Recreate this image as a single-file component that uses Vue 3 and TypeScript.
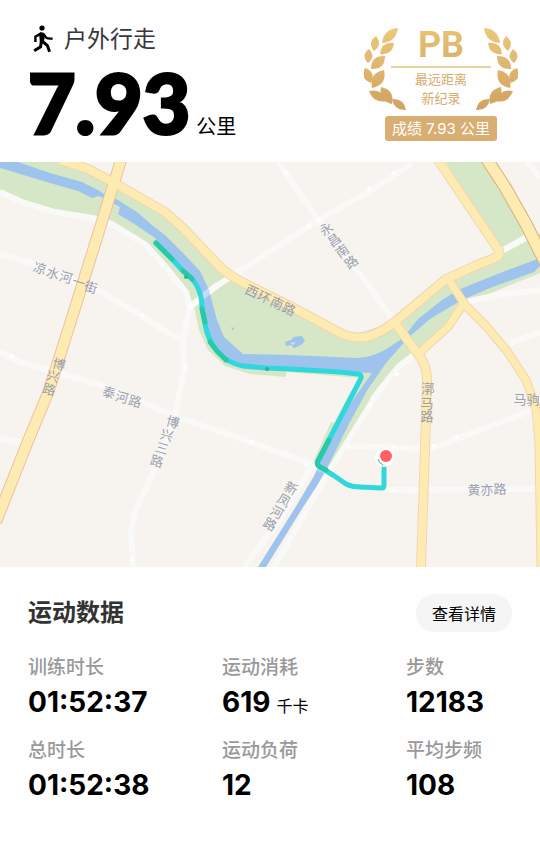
<script setup lang="ts">
interface Stat {
  label: string
  value: string
  unit?: string
}

interface RoadLabel {
  angle: number
  size: number
  glyphs: [string, number, number][]
}

const stats: Stat[] = [
  { label: '训练时长', value: '01:52:37' },
  { label: '运动消耗', value: '619', unit: '千卡' },
  { label: '步数', value: '12183' },
  { label: '总时长', value: '01:52:38' },
  { label: '运动负荷', value: '12' },
  { label: '平均步频', value: '108' },
]

// Leaves of the left laurel branch: base point, tip point, thickness
const leaves: number[][] = [
  [18, 19, 34, 4, 9],
  [10, 27, 12, 12, 8],
  [16, 30, 30, 19, 9],
  [4, 39, 5, 25, 8],
  [7, 45, 21, 32, 10],
  [7, 59, 1, 44, 9],
  [8, 64, 20, 46, 11],
  [5, 67, 23, 77, 9],
  [28, 80, 17, 63, 10],
  [28, 75, 42, 86, 8],
]

function leafPath([x1, y1, x2, y2, w]: number[]): string {
  const length = Math.hypot(x2 - x1, y2 - y1)
  const nx = (-(y2 - y1) / length) * w
  const ny = ((x2 - x1) / length) * w
  const mx = (x1 + x2) / 2
  const my = (y1 + y2) / 2
  return `M${x1} ${y1}Q${mx + nx} ${my + ny} ${x2} ${y2}Q${mx - nx} ${my - ny} ${x1} ${y1}Z`
}

const quietRoads: string[] = [
  'M0 254L34 264L98 290L140 315L182 341',
  'M0 192L22 202L55 212L98 219L112 224L146 245L166 267L186 292L190 306L183 340L184 370L175 415L155 468L135 512L131 530L133 567',
  'M188 308L218 285L310 225L375 188L412 164',
  'M278 162L318 219L360 274L392 318',
  'M0 352L20 362L100 385L180 418L250 442L318 466',
  'M0 438L22 443',
  'M312 465L280 520L244 567',
  'M415 354L398 367L378 392L330 470L274 567',
  'M347 446L430 449L480 430L530 411',
  'M384 490L540 489',
  'M466 302L498 295L540 290',
  'M527 162L540 178',
  'M510 343L540 332',
]

const majorRoads: { d: string; width: number; edge: string }[] = [
  { d: 'M464 303L448 327L418 354', width: 8, edge: '#f2d5ae' },
  { d: 'M446 276L466 306L486 326L507 351L526 380L536 408L539 445L541 567', width: 8, edge: '#f2d5ae' },
  { d: 'M392 319L421 358Q427 368 427 380L425 450L421 567', width: 9, edge: '#f2d5ae' },
  { d: 'M60 160L88 169L118 185L165 212L182 227L222 269L236 279L290 306L340 333Q352 339 366 337Q380 334 396 321L446 279L475 266L497 257Q501 254 498 249L438 160', width: 9, edge: '#f2d5ae' },
  { d: 'M121 160L100 228L59 359L48 393L28 441L-4 522', width: 11, edge: '#eebfa0' },
  { d: 'M486 158L505 187L526 224L546 264', width: 12, edge: '#d8b07c' },
]

const roadLabels: RoadLabel[] = [
  { angle: 17, size: 13, glyphs: [['凉', 40, 268], ['水', 53, 273], ['河', 66, 277], ['一', 79, 282], ['街', 91, 287]] },
  { angle: 15, size: 13, glyphs: [['博', 59, 364], ['兴', 53, 376], ['路', 49, 389]] },
  { angle: 15, size: 13, glyphs: [['泰', 109, 392], ['河', 122, 397], ['路', 135, 401]] },
  { angle: 16, size: 13, glyphs: [['博', 173, 422], ['兴', 167, 435], ['三', 162, 448], ['路', 157, 461]] },
  { angle: -36, size: 13, glyphs: [['永', 326, 229], ['昌', 334, 240], ['南', 342, 251], ['路', 351, 262]] },
  { angle: 25, size: 13, glyphs: [['西', 252, 291], ['环', 264, 297], ['南', 277, 303], ['路', 289, 309]] },
  { angle: 29, size: 13, glyphs: [['新', 291, 488], ['凤', 284, 500], ['河', 277, 512], ['路', 270, 524]] },
  { angle: 0, size: 13, glyphs: [['漷', 428, 388], ['马', 427, 403], ['路', 427, 416]] },
  { angle: 0, size: 13, glyphs: [['马', 520, 399], ['驹', 533, 399]] },
  { angle: -1, size: 13, glyphs: [['黄', 474, 490], ['亦', 487, 490], ['路', 500, 489]] },
]

const crossings: number[][] = [
  [142, 315], [162, 265], [12, 356], [286, 173], [319, 220], [309, 226], [394, 173], [369, 189],
  [190, 307], [185, 367], [252, 442], [306, 465], [394, 447], [434, 446], [457, 437], [394, 490],
  [348, 446], [370, 405], [397, 374], [132, 560],
]

const route =
  'M156 243L172 259L182 270Q192 277 197 286Q202 296 202 307L205 324Q208 340 217 351Q227 363 243 366L266 368L290 369L340 372L358 374Q363 375 360 380L318 461Q316 465 320 467L333 475L346 484Q352 487 360 487L382 488Q384 488 384 485L384 466'
</script>

<template>
  <main class="page">
    <header class="summary">
      <div class="headline">
        <h1 class="activity">
          <svg class="walker" viewBox="0 0 24 30" aria-hidden="true">
            <circle cx="10" cy="4" r="2.6" />
            <path class="limb" d="M3.4 18V12.8L9 9.4L11.8 10.4L14 13.4Q15 14.6 20.6 14.6" />
            <path class="torso" d="M7 10L11.4 8.6L13 11L12 17.6L8 18.4Z" />
            <path class="leg" d="M9.4 17L8.6 22.8L2.2 26.8M10.6 17.4L15.4 21.6L17.6 27.8" />
          </svg>
          户外行走
        </h1>
        <p class="distance"><strong>7.93</strong><span>公里</span></p>
      </div>

      <section class="badge" aria-label="最远距离新纪录">
        <svg class="laurel" viewBox="0 0 154 88" aria-hidden="true">
          <defs>
            <linearGradient id="gold" gradientUnits="userSpaceOnUse" x1="0" y1="0" x2="0" y2="88">
              <stop offset="0" stop-color="#ecca7b" />
              <stop offset="1" stop-color="#d1a061" />
            </linearGradient>
          </defs>
          <g fill="url(#gold)">
            <path v-for="(leaf, i) in leaves" :key="i" :d="leafPath(leaf)" />
          </g>
          <g fill="url(#gold)" transform="translate(154 0) scale(-1 1)">
            <path v-for="(leaf, i) in leaves" :key="i" :d="leafPath(leaf)" />
          </g>
        </svg>
        <strong class="pb">PB</strong>
        <p class="record">最远距离<br />新纪录</p>
        <p class="result">成绩 7.93 公里</p>
      </section>
    </header>

    <svg class="map" viewBox="0 162 540 405" role="img" aria-label="运动轨迹">
      <rect class="land" x="0" y="162" width="540" height="405" />

      <g class="park">
        <path d="M0 162H60L118 185L182 227L236 279L350 336L396 321L446 279L497 257L540 234V273L466 303L448 327L418 354L392 372L372 395L334 468L326 472L316 464L334 423L346 400L360 378L287 372L285 377L250 374L225 366L208 350L199 330L194 306L182 285L166 266L146 244L112 223L98 218L55 210L22 200L0 190Z" />
        <path d="M446 162H483L528 236L503 254Z" />
        <path d="M331 422L337 424L319 466L313 462Z" />
      </g>

      <g class="quiet">
        <path v-for="(road, i) in quietRoads" :key="i" :d="road" />
        <path class="footbridge" d="M500 252L528 236" />
      </g>

      <g class="water">
        <path d="M0 162H18L50 173L82 182L98 190L104 194L118 200L137 212L153 226L166 236L182 252L200 271L209 290L217 320L224 337L243 354L290 355L358 358Q374 357 388 348L403 338L418 319L442 300L458 290L500 273L540 258V266L534 272L490 288L460 301L430 319L408 338L386 363L368 389L350 422L336 450L326 470L318 484L300 512L266 567H258L295 508L314 476L322 458L350 404L372 373L340 372L290 370L240 367Q224 362 215 348L205 322L202 295L193 279L176 261L155 238L136 225L118 214L120 207L99 196L92 198L78 191L50 183L0 168Z" />
        <path d="M285 342L291 340L294 337L302 336L305 341L301 345L294 348L291 345L286 346Z" />
        <path d="M231 327L234 328L233 331Z" />
      </g>
      <path class="islet" d="M290 343L296 342L293 345Z" />

      <g class="bridge">
        <path d="M190 307L218 284" />
        <path d="M312 465L334 474" />
      </g>

      <g class="major">
        <path v-for="(road, i) in majorRoads" :key="`e${i}`" :d="road.d" :stroke="road.edge" :stroke-width="road.width + 1" />
        <path v-for="(road, i) in majorRoads" :key="`f${i}`" :d="road.d" stroke="#feebb1" :stroke-width="road.width - 1" />
      </g>

      <circle v-for="([x, y], i) in crossings" :key="i" class="crossing" :cx="x" :cy="y" r="2" />

      <g v-for="(label, i) in roadLabels" :key="i" class="road-label" :font-size="label.size">
        <text
          v-for="[glyph, x, y] in label.glyphs"
          :key="`${x}-${y}`"
          :transform="`translate(${x} ${y}) rotate(${label.angle})`"
          dy="5"
        >{{ glyph }}</text>
      </g>

      <path class="route" :d="route" />
      <g class="route slow">
        <path d="M156 243L172 259" />
        <path d="M183 271L192 279" />
        <path d="M202 309L205 322" />
        <path d="M210 342L217 351L226 360" />
        <path d="M329 440L318 461Q316 465 320 467L326 470" />
      </g>
      <circle class="slow-dot" cx="186" cy="277" r="2" />
      <circle class="slow-dot" cx="267" cy="369" r="2" />

      <circle class="halo" cx="384" cy="458" r="9" />
      <circle class="halo" cx="386" cy="456" r="8" />
      <path class="start-ring" d="M378 459Q379 463 383 465" />
      <circle class="pin" cx="386" cy="456" r="6" />
    </svg>

    <section class="data">
      <div class="data-head">
        <h2>运动数据</h2>
        <button type="button">查看详情</button>
      </div>
      <dl class="stats">
        <div v-for="stat in stats" :key="stat.label">
          <dt>{{ stat.label }}</dt>
          <dd>{{ stat.value }}<small v-if="stat.unit">{{ stat.unit }}</small></dd>
        </div>
      </dl>
    </section>
  </main>
</template>

<style>
body {
  background: #fefefe;
}
</style>

<style scoped>
.page {
  font-family: Inter, "Noto Sans CJK SC", sans-serif;
  color: #000;
}

h1,
h2,
p,
dl,
dd {
  margin: 0;
}

.summary {
  display: flex;
  justify-content: space-between;
  box-sizing: border-box;
  min-height: 162px;
  padding: 24px 22px 12px 28px;
}

.activity {
  display: flex;
  align-items: center;
  gap: 8px;
  height: 30px;
  font-size: 23px;
  font-weight: 400;
  line-height: 30px;
  color: #38353d;
}

.walker {
  width: 24px;
  height: 30px;
  margin-left: 4px;
  fill: #000;
}

.limb,
.leg {
  fill: none;
  stroke: #000;
  stroke-width: 2.4;
}

.leg {
  stroke-width: 3;
}

.distance {
  display: flex;
  align-items: baseline;
  gap: 6px;
}

.distance strong {
  font-family: Lato, sans-serif;
  font-size: 82px;
  font-weight: 900;
  line-height: 96px;
  -webkit-text-stroke: 3px #000;
}

.distance span {
  font-size: 20px;
  line-height: 24px;
}

.badge {
  position: relative;
  display: flex;
  flex-direction: column;
  align-items: center;
  width: 154px;
}

.laurel {
  position: absolute;
  top: 0;
  left: 0;
  width: 154px;
  height: 88px;
}

.pb {
  width: 100px;
  border-bottom: 2px solid #ebd0a0;
  font-family: Roboto, sans-serif;
  font-size: 36px;
  line-height: 42px;
  text-align: center;
  color: transparent;
  background: linear-gradient(#e9c673, #d9ae68);
  background-clip: text;
}

.record {
  padding-top: 2px;
  font-size: 13px;
  line-height: 19px;
  text-align: center;
  color: #d6ac6c;
}

.result {
  margin-top: 8px;
  padding: 0 7px;
  border-radius: 3px;
  font-size: 15px;
  line-height: 25px;
  white-space: nowrap;
  color: #fff;
  background: #d9ae72;
}

.map {
  display: block;
  width: 100%;
  height: auto;
}

.land {
  fill: #f7f4ef;
}

.park {
  fill: #d5e7c6;
}

.water {
  fill: #9ec4ee;
}

.islet {
  fill: #d5e7c6;
}

.quiet {
  fill: none;
  stroke: #f9f9f8;
  stroke-width: 6;
  stroke-linejoin: round;
}

.bridge {
  fill: none;
  stroke: #fff;
  stroke-opacity: 0.4;
  stroke-width: 6;
}

.major {
  fill: none;
  stroke-linejoin: round;
}

.crossing {
  fill: #fff;
}

.road-label {
  fill: #9a9eae;
  font-family: "Noto Sans CJK SC", sans-serif;
  text-anchor: middle;
}

.route {
  fill: none;
  stroke: #30d7dc;
  stroke-width: 5;
  stroke-linecap: round;
  stroke-linejoin: round;
}

.slow {
  stroke: #27c9a8;
}

.slow-dot {
  fill: #27b58e;
}

.halo {
  fill: #fff;
}

.start-ring {
  fill: none;
  stroke: #3aa98a;
  stroke-width: 1;
}

.pin {
  fill: #ff6068;
}

.data {
  padding: 27px 28px 24px;
}

.data-head {
  display: flex;
  align-items: center;
  justify-content: space-between;
  height: 38px;
}

.data-head h2 {
  font-size: 24px;
  font-weight: 600;
  line-height: 36px;
  color: #333;
}

.data-head button {
  height: 38px;
  padding: 0 16px;
  border: 0;
  border-radius: 19px;
  font: inherit;
  font-size: 16px;
  color: #000;
  background: #f5f5f5;
}

.stats {
  display: grid;
  grid-template-columns: 194fr 184fr 106fr;
  row-gap: 15px;
  padding-top: 22px;
}

.stats dt {
  font-size: 19px;
  font-weight: 500;
  line-height: 28px;
  color: #999;
}

.stats dd {
  font-size: 28px;
  font-weight: 700;
  line-height: 40px;
  white-space: nowrap;
}

.stats small {
  margin-left: 6px;
  font-size: 16px;
  font-weight: 400;
  line-height: 20px;
}
</style>
